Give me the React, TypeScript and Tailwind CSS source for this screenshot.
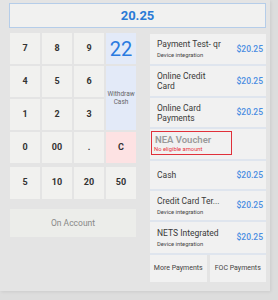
const keys: { label: string; cls?: string }[] = [
  { label: "7" },
  { label: "8" },
  { label: "9" },
  { label: "22", cls: "bg-[#e3eaf8] text-[20px] font-normal text-[#2a7ae0]" },
  { label: "4" },
  { label: "5" },
  { label: "6" },
  { label: "1" },
  { label: "2" },
  { label: "3" },
  { label: "0" },
  { label: "00" },
  { label: "." },
  { label: "C", cls: "bg-[#fde2e3] text-[9px] font-bold text-[#333]" },
];

const plainKey = "bg-[#f1f1ef] text-[9px] font-bold text-[#333]";

type Method = { title: string[]; sub?: string; h: string };

const methods: Method[] = [
  { title: ["Payment Test- qr"], sub: "Device integration", h: "h-[30px]" },
  { title: ["Online Credit", "Card"], h: "h-[30px]" },
  { title: ["Online Card", "Payments"], h: "h-[29px]" },
];

const methodsAfter: Method[] = [
  { title: ["Cash"], h: "h-[28px]" },
  { title: ["Credit Card Ter..."], sub: "Device integration", h: "h-[29px]" },
  { title: ["NETS Integrated"], sub: "Device integration", h: "h-[31px]" },
];

function MethodCard({ m }: { m: Method }) {
  return (
    <div className={`${m.h} flex items-center justify-between bg-[#f1f1f1] pl-[7px] pr-[3px]`}>
      <div className="flex flex-col">
        {m.title.map((t) => (
          <span key={t} className="text-[8.5px] leading-[10px] text-[#3a3a3a]">
            {t}
          </span>
        ))}
        {m.sub && <span className="mt-[2px] text-[5.8px] leading-[8px] text-[#444]">{m.sub}</span>}
      </div>
      <span className="text-[8.5px] font-medium text-[#4a8de2]">$20.25</span>
    </div>
  );
}

export default function App() {
  return (
    <div className="w-[278px] h-[300px] bg-[#dddddd] font-['Roboto',sans-serif]">
      <div className="w-[270px] h-[291px] bg-[#e4e4e4] pt-[3px] pl-[9px] shadow-[1px_1px_3px_rgba(0,0,0,0.08)]">
        {/* Amount field */}
        <div className="w-[257px] h-[25px] border border-[#b5cde9] bg-[#f1f1f0] flex items-center justify-center">
          <span className="text-[13px] font-bold text-[#2a7ad6]">20.25</span>
        </div>

        <div className="flex mt-[5px]">
          {/* Keypad */}
          <div className="w-[126px] ml-[1px] flex flex-col">
            <div className="grid grid-cols-4 auto-rows-[31px] gap-[2px]">
              {keys.slice(0, 4).map((k) => (
                <div key={k.label} className={`flex items-center justify-center ${k.cls ?? plainKey}`}>
                  {k.label}
                </div>
              ))}
              {keys.slice(4, 7).map((k) => (
                <div key={k.label} className={`flex items-center justify-center ${plainKey}`}>
                  {k.label}
                </div>
              ))}
              <div className="row-span-2 flex flex-col items-center justify-center bg-[#e3eaf8] text-[6.5px] leading-[8px] text-[#666]">
                <span>Withdraw</span>
                <span>Cash</span>
              </div>
              {keys.slice(7).map((k) => (
                <div key={k.label} className={`flex items-center justify-center ${k.cls ?? plainKey}`}>
                  {k.label}
                </div>
              ))}
            </div>

            <div className="grid grid-cols-4 gap-[2px] mt-[4px]">
              {["5", "10", "20", "50"].map((v) => (
                <div key={v} className={`h-[32px] flex items-center justify-center ${plainKey}`}>
                  {v}
                </div>
              ))}
            </div>

            <div className="mt-[10px] h-[28px] flex items-center justify-center bg-[#ecedea] text-[8.5px] text-[#888]">
              On Account
            </div>
          </div>

          {/* Payment methods */}
          <div className="ml-[14px] mt-[1px] w-[116px] flex flex-col gap-[2px] bg-[#dfe5ee]">
            {methods.map((m) => (
              <MethodCard key={m.title[0]} m={m} />
            ))}
            <div className="h-[30px] bg-[#f1f1f1] pl-[1px] pt-[2px]">
              <div className="w-[81px] h-[24px] border border-[#e0303a] flex flex-col justify-center pl-[3px]">
                <span className="text-[9.5px] leading-[11px] font-semibold text-[#9a9a9a]">NEA Voucher</span>
                <span className="mt-[1px] text-[5.8px] leading-[7px] text-[#e8333d] -ml-[1px]">No eligible amount</span>
              </div>
            </div>
            {methodsAfter.map((m) => (
              <MethodCard key={m.title[0]} m={m} />
            ))}
            <div className="h-[27px] grid grid-cols-2 gap-[3px] bg-[#e4e4e4]">
              <div className="flex items-center justify-center bg-[#f1f1f1] text-[7px] text-[#444]">More Payments</div>
              <div className="flex items-center justify-center bg-[#f1f1f1] text-[7px] text-[#444]">FOC Payments</div>
            </div>
          </div>
        </div>
      </div>
    </div>
  );
}
